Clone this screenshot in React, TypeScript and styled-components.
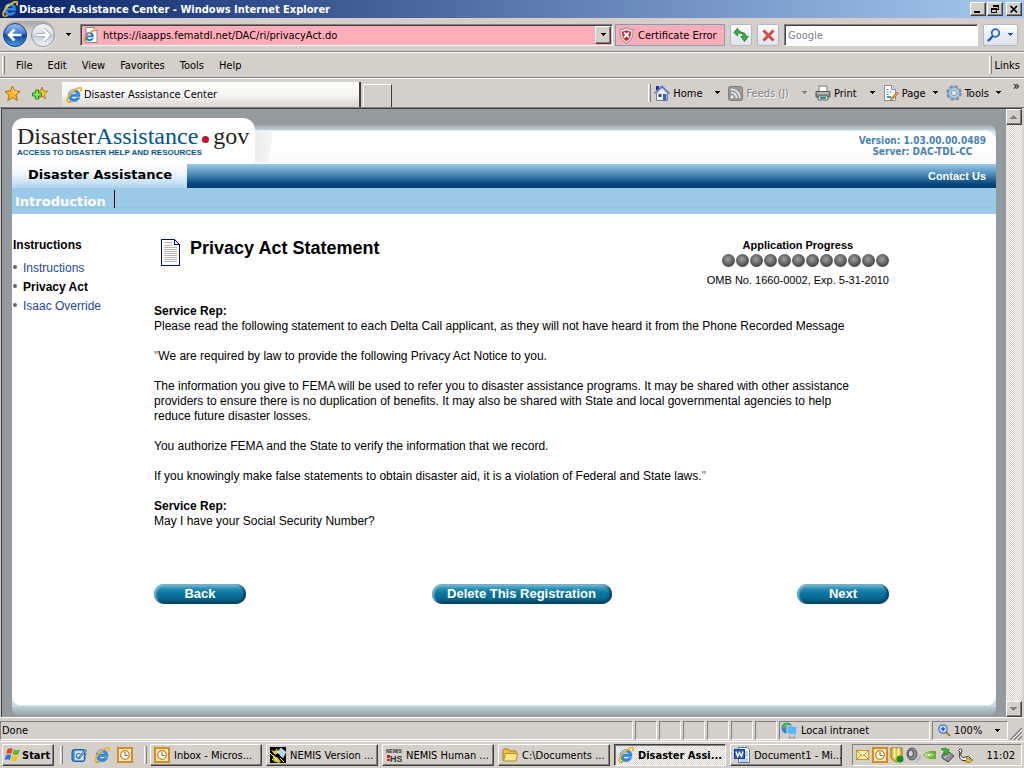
import React from "react";
import styled, { createGlobalStyle, css } from "styled-components";

const tahoma = '"DejaVu Sans Condensed", "DejaVu Sans", sans-serif';
const verdana = '"DejaVu Sans", sans-serif';
const arial = '"Liberation Sans", Arial, sans-serif';

const face = "#d4cfc8";
const shadow = "#808080";
const pageGray = "#939b9e";

const GlobalStyle = createGlobalStyle`
  * { box-sizing: border-box; }
  body { margin: 0; background: ${face}; color: #000; font: 11px/13px ${tahoma}; }
  button, input { font: inherit; color: inherit; margin: 0; padding: 0; border: 0; background: none; border-radius: 0; }
  a { text-decoration: none; color: inherit; }
  h1, h2, p, ul { margin: 0; padding: 0; }
  ul { list-style: none; }
  svg { display: block; flex: none; }
`;

const raised = css`
  border: 1px solid;
  border-color: #fff #404040 #404040 #fff;
  box-shadow: inset -1px -1px 0 ${shadow};
  background: ${face};
`;

const dither = css`
  background: repeating-conic-gradient(#fff 0 25%, ${face} 0 50%) 0 0 / 2px 2px;
`;

/* ---------- window frame ---------- */

const Desktop = styled.div`
  display: flex;
  flex-direction: column;
  min-height: 100vh;
`;

const TitleBar = styled.header`
  display: flex;
  align-items: center;
  gap: 1px;
  height: 18px;
  padding: 0 2px 0 2px;
  background: linear-gradient(90deg, #0a246a, #a6caf0);
`;

const WindowTitle = styled.span`
  flex: 1;
  color: #fff;
  font-weight: bold;
  white-space: nowrap;
`;

const CaptionButton = styled.button<{ $apart?: boolean }>`
  ${raised}
  display: grid;
  place-items: center;
  width: 16px;
  height: 14px;
  margin-left: ${(p) => (p.$apart ? 2 : 0)}px;
`;

const NavRow = styled.div`
  display: flex;
  align-items: center;
  gap: 5px;
  height: 34px;
  padding: 1px 6px 0 2px;
  border-bottom: 1px solid ${shadow};
`;

const TravelButtons = styled.div`
  display: flex;
  align-items: center;
  gap: 2px;
  width: 54px;
  height: 28px;
  flex: none;
  border-radius: 14px;
  background: linear-gradient(#a8a6a2, #d8d4ce 40%, #e4e0da);
`;

const Plain = styled.button`
  display: flex;
  align-items: center;
`;

const HistoryButton = styled(Plain)`
  width: 14px;
  justify-content: center;
`;

const AddressGroup = styled.div`
  display: flex;
  flex: 1;
  gap: 2px;
`;

const AddressBox = styled.label`
  display: flex;
  flex: 1;
  align-items: center;
  gap: 4px;
  height: 22px;
  padding: 0 1px 0 2px;
  border: 1px solid;
  border-color: ${shadow} #fff #fff ${shadow};
  box-shadow: inset 1px 1px 0 #404040;
  background: #ffadb8;
`;

const TextInput = styled.input`
  flex: 1;
  min-width: 0;
  outline: none;
  &::placeholder { color: #808080; opacity: 1; }
`;

const DropButton = styled.button`
  ${raised}
  display: grid;
  place-items: center;
  width: 16px;
  height: 18px;
`;

const CertButton = styled.button`
  display: flex;
  align-items: center;
  gap: 4px;
  width: 110px;
  height: 22px;
  padding-left: 3px;
  border: 1px solid #7f9db9;
  background: #ffadb8;
  white-space: nowrap;
`;

const GlassButton = styled.button<{ $wide?: boolean }>`
  display: flex;
  align-items: center;
  justify-content: ${(p) => (p.$wide ? "space-around" : "center")};
  width: ${(p) => (p.$wide ? 35 : 22)}px;
  height: 22px;
  flex: none;
  border: 1px solid #b4b8c4;
  border-radius: 2px;
  background: linear-gradient(#fdfdfe, #eceef4 50%, #dfe3ee);
`;

const SearchBox = styled.label`
  display: flex;
  align-items: center;
  width: 194px;
  height: 22px;
  padding-left: 3px;
  border: 1px solid;
  border-color: ${shadow} #fff #fff ${shadow};
  box-shadow: inset 1px 1px 0 #404040;
  background: #fff;
`;

const MenuRow = styled.nav`
  display: flex;
  align-items: center;
  gap: 15px;
  height: 26px;
  padding: 0 4px 0 2px;
  border-top: 1px solid #fff;
  border-bottom: 1px solid ${shadow};
`;

const Grip = styled.i`
  width: 3px;
  height: 18px;
  flex: none;
  margin-right: -4px;
  border-left: 1px solid #fff;
  border-right: 1px solid ${shadow};
`;

const LinksGroup = styled.div`
  display: flex;
  align-items: center;
  gap: 7px;
  margin-left: auto;
`;

const TabRow = styled.div`
  display: flex;
  align-items: center;
  height: 30px;
  padding: 0 4px 0 4px;
  border-top: 1px solid #fff;
  border-bottom: 1px solid ${shadow};
`;

const FavButtons = styled.div`
  display: flex;
  gap: 10px;
  width: 58px;
`;

const BrowserTab = styled.button`
  display: flex;
  align-items: center;
  align-self: flex-end;
  gap: 2px;
  width: 299px;
  height: 25px;
  padding-left: 4px;
  border-right: 2px solid #404040;
  background: linear-gradient(#fff, #f6f5f3 50%, #dad6cf);
`;

const NewTab = styled.button`
  align-self: flex-end;
  width: 29px;
  height: 23px;
  margin-left: 2px;
  border: 1px solid #fff;
  border-right: 1px solid #404040;
  border-bottom: 0;
`;

const CommandBar = styled.div`
  display: flex;
  align-items: center;
  gap: 7px;
  height: 29px;
  margin-left: auto;
`;

const Command = styled.button<{ $split?: boolean }>`
  display: flex;
  align-items: center;
  gap: 3px;
  white-space: nowrap;
  &:disabled { color: ${shadow}; text-shadow: 1px 1px 0 #fff; }
  & > svg:last-child { margin-left: ${(p) => (p.$split ? 9 : 3)}px; }
`;

const Chevron = styled.button`
  align-self: flex-start;
  margin-left: 4px;
  font-size: 13px;
`;

/* ---------- web page ---------- */

const Viewport = styled.div`
  display: flex;
  flex: 1;
  border-top: 1px solid #404040;
  border-left: 1px solid #404040;
  margin: 0 2px 0 1px;
  background: ${pageGray};
`;

const WebPage = styled.main`
  display: flex;
  flex: 1;
  flex-direction: column;
  min-width: 0;
  padding: 9px 10px 0 10px;
`;

const ScrollTrack = styled.div`
  ${dither}
  display: flex;
  flex-direction: column;
  justify-content: space-between;
  width: 16px;
  flex: none;
`;

const ScrollButton = styled.button`
  ${raised}
  display: grid;
  place-items: center;
  width: 16px;
  height: 16px;
`;

const Masthead = styled.header`
  display: flex;
  align-items: flex-end;
`;

const LogoCard = styled.a`
  width: 243px;
  height: 46px;
  flex: none;
  padding: 5px 0 0 5px;
  border-radius: 12px 12px 0 0;
  background: #fff;
`;

const LogoName = styled.span`
  display: flex;
  align-items: center;
  font: 24px/26px "Liberation Serif", serif;
  color: #231f20;
  & > b { font-weight: normal; color: #00558c; }
`;

const LogoDot = styled.i`
  width: 7px;
  height: 7px;
  margin: 7px 4px 0;
  border-radius: 50%;
  background: #c8102e;
`;

const LogoTag = styled.span`
  display: block;
  font: bold 8px/8px ${arial};
  color: #00558c;
  white-space: nowrap;
`;

const BandWrap = styled.div`
  flex: 1;
  border-radius: 0 12px 0 0;
  background: linear-gradient(${pageGray} 2px, #b9c8cf 7px, #cfe0e8 9px, #cfe0e8 12px, ${pageGray});
`;

const Band = styled.div`
  display: flex;
  justify-content: space-between;
  height: 34px;
  margin-top: 8px;
  padding-right: 10px;
  border-top: 1px solid #d8f0fa;
  border-radius: 0 10px 0 0;
  background: linear-gradient(#fff, #fff 50%, #f8f9fa);
`;

const Fold = styled.i`
  width: 18px;
  height: 31px;
  background: linear-gradient(90deg, #ececec, #f6f6f6);
  clip-path: polygon(0 0, 100% 0, 75% 100%, 0 100%);
`;

const Version = styled.p`
  padding-top: 4px;
  font: bold 10px/11px ${tahoma};
  color: #4682b4;
  text-align: center;
`;

const MainNav = styled.nav`
  display: flex;
  align-items: center;
  justify-content: space-between;
  height: 24px;
  padding-right: 10px;
  background: linear-gradient(#9acae8, #4a88b4 45%, #0a4a80 80%, #003c72);
  font: bold 11px/13px ${arial};
  color: #fff;
`;

const ActiveSection = styled.a`
  width: 175px;
  height: 24px;
  padding: 3px 0 0 16px;
  background: linear-gradient(#fff, #edf4fb 45%, #b0d4f0);
  font: bold 13px/16px ${verdana};
  color: #000;
  white-space: nowrap;
`;

const SubNav = styled.nav`
  display: flex;
  height: 26px;
  padding: 2px 0 0 3px;
  background: linear-gradient(#9acae8 19px, #92c3e2 19px, #92c3e2 20px, #9acae8 20px);
  font: bold 13px/23px ${verdana};
  color: #fff;
  & > a { padding-right: 8px; }
`;

const NavRule = styled.i`
  width: 1px;
  height: 18px;
  background: #000;
`;

const Sheet = styled.div`
  display: flex;
  flex: 1;
  padding-right: 107px;
  border-radius: 0 0 8px 8px;
  background: #fff;
  font: 12px/15px ${arial};
`;

const SheetBack = styled.div`
  display: flex;
  flex: 1;
  background: linear-gradient(#fff, #fff calc(100% - 8px), #c9dbe4 0);
`;

const SheetShadow = styled.div`
  height: 12px;
  border-radius: 0 0 10px 10px;
  background: linear-gradient(#d4eaf4, #bccdd5 2px, ${pageGray});
`;

const SideNav = styled.nav`
  width: 142px;
  flex: none;
  padding: 24px 0 0 1px;
`;

const SideTitle = styled.h2`
  margin-bottom: 6px;
  font-size: 12px;
  line-height: 15px;
`;

const SideItem = styled.li<{ $current?: boolean }>`
  display: flex;
  gap: 6px;
  font-weight: ${(p) => (p.$current ? "bold" : "normal")};
  color: ${(p) => (p.$current ? "#000" : "#1f4a8f")};
  line-height: 19px;
  &::before {
    content: "";
    width: 4px;
    height: 4px;
    margin-top: 6px;
    border-radius: 50%;
    background: #666;
  }
`;

const Article = styled.article`
  flex: 1;
  min-width: 0;
`;

const ArticleHead = styled.div`
  display: flex;
  justify-content: space-between;
  height: 90px;
  padding: 25px 0 0 7px;
`;

const Heading = styled.div`
  display: flex;
  gap: 10px;
  & > h1 { font-size: 18px; line-height: 18px; }
`;

const Progress = styled.div`
  display: flex;
  flex-direction: column;
  align-items: center;
  gap: 2px;
  font-size: 11px;
  line-height: 13px;
  & > p { margin-top: 5px; }
`;

const Dots = styled.div`
  display: flex;
  align-self: flex-end;
  gap: 1px;
`;

const Dot = styled.i`
  width: 13px;
  height: 13px;
  border-radius: 50%;
  background: radial-gradient(circle at 45% 40%, #a0a0a0, #666 45%, #2c2c2c 90%);
`;

const Copy = styled.div`
  display: flex;
  flex-direction: column;
  gap: 15px;
  max-width: 711px;
  & i { font-style: normal; color: #a0522d; }
`;

const Actions = styled.div`
  display: flex;
  justify-content: space-between;
  margin: 55px 0 40px;
`;

const PillButton = styled.button<{ $wide?: boolean }>`
  width: ${(p) => (p.$wide ? 180 : 92)}px;
  height: 20px;
  border-radius: 10px;
  background: linear-gradient(#7fbdd6, #2a8cb2 25%, #0a76a2 45%, #086a94 70%, #05405c);
  box-shadow: inset -2px -1px 2px #04415e, inset 2px 1px 2px #7fb8d0;
  font: bold 13px/18px ${arial};
  color: #fff;
`;

/* ---------- status bar and task bar ---------- */

const StatusBar = styled.footer`
  display: flex;
  gap: 2px;
  height: 24px;
  padding: 3px 2px 1px 0;
  border-top: 1px solid #fff;
`;

const StatusCell = styled.div<{ $width?: number }>`
  display: flex;
  align-items: center;
  gap: 3px;
  ${(p) => (p.$width ? `width: ${p.$width}px;` : "flex: 1;")}
  height: 19px;
  padding: 0 1px;
  border: 1px solid;
  border-color: ${shadow} #fff #fff ${shadow};
`;

const ZoomButton = styled(Plain)`
  flex: 1;
  gap: 3px;
  padding: 0 5px 0 4px;
  & > svg:last-child { margin-left: auto; }
`;

const TaskBar = styled.footer`
  display: flex;
  align-items: center;
  gap: 4px;
  height: 27px;
  padding: 0 2px;
  border-top: 1px solid #fff;
`;

const StartButton = styled.button`
  ${raised}
  display: flex;
  align-items: center;
  gap: 2px;
  width: 52px;
  height: 22px;
  padding-left: 1px;
  font-weight: bold;
`;

const QuickLaunch = styled.div`
  display: flex;
  align-items: center;
  gap: 7px;
  width: 87px;
  margin-left: 1px;
  padding-left: 1px;
  & > i { margin: 0 1px 0 0; }
  & > i:last-child { margin: 0 0 0 4px; }
`;

const TaskButton = styled.button<{ $active?: boolean }>`
  ${raised}
  display: flex;
  align-items: center;
  gap: 4px;
  flex: 0 1 112px;
  min-width: 0;
  height: 22px;
  padding-left: 3px;
  white-space: nowrap;
  ${(p) =>
    p.$active &&
    css`
      ${dither}
      border-color: #404040 #fff #fff #404040;
      box-shadow: inset 1px 1px 0 ${shadow};
      font-weight: bold;
    `}
`;

const Tray = styled.div`
  display: flex;
  align-items: center;
  gap: 2px;
  height: 22px;
  width: 170px;
  margin-left: auto;
  padding: 0 6px 0 3px;
  border: 1px solid;
  border-color: ${shadow} #fff #fff ${shadow};
  & > time { margin-left: auto; }
`;

/* ---------- icons ---------- */

const Arrow = ({ color = "#000" }: { color?: string }) => (
  <svg width="7" height="4" shapeRendering="crispEdges">
    <path d="M1 0h5v1h-1v1h-1v1h-1v-1h-1v-1h-1z" fill={color} />
  </svg>
);

const IeIcon = ({ size = 16 }: { size?: number }) => (
  <svg width={size} height={size} viewBox="0 0 16 16">
    <path d="M14 9.500H5.400c.2 1.600 1.400 2.400 2.900 2.400 1 0 1.900-.4 2.400-1.200h3c-.8 2.400-2.800 3.900-5.500 3.900-3.500 0-6-2.400-6-5.900 0-3.600 2.600-6.200 6-6.200 3.500 0 5.800 2.500 5.800 6.100zM10.900 7.100C10.700 5.800 9.700 5.200 8.300 5.200S5.800 5.800 5.500 7.100z" fill="#2a90ea" stroke="#1763c0" strokeWidth=".4" />
    <path d="M3.700 6C4.700 4.200 6.300 3.400 8.300 3.400" stroke="#a8e4ff" strokeWidth="1.200" fill="none" />
    <path d="M1.700 14.700C-.5 12 4.500 5.800 9.500 2.600 12.300.8 15 .3 15.300 1.700c.2.800-.2 1.800-.7 2.700" fill="none" stroke="#f8b420" strokeWidth="1.800" />
    <path d="M1.700 14.700c.9.900 2.700.3 4.300-.7" fill="none" stroke="#e09a18" strokeWidth="1.500" />
  </svg>
);

const PageIe = () => (
  <svg width="16" height="16" viewBox="0 0 16 16">
    <path d="M3 .5h8l3 3v12H3z" fill="#fff" stroke="#8a8a8a" />
    <path d="M11 .5v3h3" fill="#ddd" stroke="#8a8a8a" />
    <g transform="translate(0 3) scale(.78)">
      <path d="M13.800 9.300H5.600c.2 1.600 1.300 2.500 2.800 2.500 1 0 1.800-.4 2.300-1.200h2.900c-.8 2.300-2.700 3.700-5.300 3.700-3.400 0-5.800-2.300-5.800-5.700 0-3.500 2.500-6 5.800-6 3.400 0 5.600 2.400 5.600 5.900zM10.900 7.100C10.700 5.800 9.700 5 8.300 5S5.900 5.800 5.600 7.100z" fill="#1f78d8" />
      <path d="M1.700 14.700C-.5 12 4.500 5.800 9.500 2.600 12.300.8 15 .3 15.300 1.700" fill="none" stroke="#f0a010" strokeWidth="1.800" />
    </g>
  </svg>
);

const TravelIcon = ({ forward }: { forward?: boolean }) => (
  <svg width="26" height="26" viewBox="0 0 26 26">
    <defs>
      <linearGradient id={forward ? "fwd" : "bck"} x1="0" y1="0" x2="0" y2="1">
        <stop offset="0" stopColor={forward ? "#f4f6f9" : "#9cc0ee"} />
        <stop offset=".45" stopColor={forward ? "#dde3ec" : "#3f78cc"} />
        <stop offset=".5" stopColor={forward ? "#bfc9d8" : "#0d3f9c"} />
        <stop offset="1" stopColor={forward ? "#f5f8fb" : "#4aa0ee"} />
      </linearGradient>
    </defs>
    <circle cx="13" cy="13" r="11.500" fill={`url(#${forward ? "fwd" : "bck"})`} stroke={forward ? "#8b95a6" : "#173a7c"} />
    <path
      d={forward ? "M6.500 13h12M13.500 7.500l5.500 5.500-5.500 5.500" : "M19.500 13h-12M12.500 7.500L7 13l5.500 5.500"}
      fill="none"
      stroke={forward ? "#8c98aa" : "transparent"}
      strokeWidth="4"
    />
    <path
      d={forward ? "M6.500 13h12M13.500 7.500l5.500 5.500-5.500 5.500" : "M19.500 13h-12M12.500 7.500L7 13l5.500 5.500"}
      fill="none"
      stroke="#fff"
      strokeWidth="2.600"
    />
  </svg>
);

const ShieldIcon = () => (
  <svg width="15" height="17" viewBox="0 0 15 17">
    <path d="M7.500.8C9.500 2.200 11.500 2.500 14 2.500c.5 6-1 11-6.500 13.700C2 13.500.5 8.500 1 2.500c2.500 0 4.500-.3 6.500-1.700z" fill="#e0e0e0" stroke="#8c8c8c" />
    <path d="M7.500 3.200c1.400.9 2.800 1.200 4.500 1.300.1 4.300-1 7.500-4.500 9.500-3.500-2-4.600-5.200-4.500-9.500 1.700-.1 3.100-.4 4.500-1.300z" fill="#cc1f1f" />
    <path d="M5 5.500l5 5M10 5.500l-5 5" stroke="#fff" strokeWidth="2" />
  </svg>
);

const RefreshIcon = () => (
  <svg width="16" height="16" viewBox="0 0 16 16">
    <path d="M.8 5.500L4.800 1v2.500c2.500 0 3.700 1.200 3.700 3.500-1-.8-2-1-3.700-1v3z" fill="#3cb042" stroke="#157a1c" strokeWidth=".8" />
    <path d="M15.200 9.500l-3.700 5-3.700-5h2.200c0-2-.4-3-1.500-4 2.700 0 4.500 1.200 4.500 4z" fill="#3cb042" stroke="#157a1c" strokeWidth=".8" />
  </svg>
);

const StopIcon = () => (
  <svg width="13" height="13" viewBox="0 0 13 13">
    <path d="M1.500 1.500l10 10M11.500 1.500l-10 10" stroke="#b02a2a" strokeWidth="2.600" />
    <path d="M1.500 1.500l10 10M11.500 1.500l-10 10" stroke="#e25858" strokeWidth="1.400" />
  </svg>
);

const SearchIcon = () => (
  <svg width="14" height="14" viewBox="0 0 14 14">
    <path d="M1 13l5-5" stroke="#1a55d0" strokeWidth="2.400" />
    <circle cx="8.500" cy="5" r="3.800" fill="#eaf4ff" stroke="#2a62dc" strokeWidth="1.800" />
  </svg>
);

const StarIcon = () => (
  <svg width="17" height="17" viewBox="0 0 17 17">
    <path d="M8.500 1l2.100 5 5.400.5-4 3.600 1.200 5.400-4.700-2.900-4.700 2.900L5 10.100 1 6.500 6.400 6z" fill="#fdb827" stroke="#b06a10" />
    <path d="M8.500 3.500l1.300 3.400 3.200.3" fill="none" stroke="#ffe89a" />
  </svg>
);

const AddStarIcon = () => (
  <svg width="17" height="17" viewBox="0 0 17 17">
    <path d="M11 2l1.500 4 4 .4-3 2.800 1 4.300-3.500-2.300-3.500 2.300 1-4.300-3-2.800 4-.4z" fill="#fdc547" stroke="#b87816" />
    <path d="M4.500 5h3v3h3v3h-3v3h-3v-3h-3V8h3z" fill="#8ee060" stroke="#1b8a22" />
  </svg>
);

const HomeIcon = () => (
  <svg width="16" height="16" viewBox="0 0 16 16">
    <path d="M2 1h3v4H2z" fill="#1a2fc0" />
    <path d="M2.500 8L8 2.500 13.500 8v7.500h-11z" fill="#e9edf4" stroke="#77839a" />
    <path d="M.5 8.500L8 1.200l7.500 7.300" fill="none" stroke="#5b72c8" strokeWidth="1.500" />
    <path d="M9 9h3.500v6.500H9z" fill="#3a60b8" />
    <path d="M4.500 9h3v3h-3z" fill="#4a4a4a" />
  </svg>
);

const FeedIcon = () => (
  <svg width="15" height="15" viewBox="0 0 15 15">
    <rect x=".5" y=".5" width="14" height="14" rx="2" fill="#9a9a9a" stroke="#7e7e7e" />
    <circle cx="4" cy="11" r="1.400" fill="#eee" />
    <path d="M3 6.500a5.500 5.500 0 0 1 5.500 5.500M3 3.200A8.800 8.800 0 0 1 11.800 12" fill="none" stroke="#eee" strokeWidth="1.500" />
  </svg>
);

const PrintIcon = () => (
  <svg width="16" height="16" viewBox="0 0 16 16">
    <path d="M4 1h8v6H4z" fill="#fff" stroke="#777" />
    <path d="M1 6.500h14V12H1z" fill="#8c8c8c" stroke="#555" />
    <path d="M2 8h12" stroke="#ddd" />
    <path d="M3.500 11h9l.5 4H3z" fill="#e8f0f4" stroke="#666" />
    <path d="M5 13h4" stroke="#2a8ab8" strokeWidth="2" />
    <path d="M9 13h2" stroke="#3aa048" strokeWidth="2" />
  </svg>
);

const PageIcon = () => (
  <svg width="16" height="16" viewBox="0 0 16 16">
    <path d="M1.500.5h7l4 4v11h-11z" fill="#fff" stroke="#8c8c94" />
    <path d="M8.500.5v4h4" fill="#d8dce8" stroke="#8c8c94" />
    <path d="M3.500 4.500h3M3.500 7h6M3.500 9.500h3" stroke="#5a7fd0" strokeDasharray="2 1" />
    <path d="M8 13l6-6 1.500 1.500-6 6L7.500 15z" fill="#f0a030" stroke="#a05a18" strokeWidth=".7" />
    <path d="M4 12h4" stroke="#36a0c0" strokeWidth="2" />
  </svg>
);

const GearIcon = () => (
  <svg width="16" height="16" viewBox="0 0 16 16">
    <circle cx="8" cy="8" r="6.500" fill="none" stroke="#7592b0" strokeWidth="2.600" strokeDasharray="3 2.100" />
    <circle cx="8" cy="8" r="6" fill="#9dbbd8" stroke="#6f8fae" strokeWidth=".8" />
    <circle cx="8" cy="8" r="4.300" fill="#bcd3e8" />
    <circle cx="8" cy="8" r="2.800" fill="#e4e2de" stroke="#6f8fae" strokeWidth=".8" />
  </svg>
);

const DocumentIcon = () => (
  <svg width="19" height="27" viewBox="0 0 19 27" shapeRendering="crispEdges">
    <path d="M.5.500h13l5 5v21H.5z" fill="#fff" stroke="#0a0a80" />
    <path d="M13.500.500v5h5" fill="none" stroke="#0a0a80" />
    <path d="M3 3.500h8M3 6.500h8M3 8.500h13M3 10.500h13M3 12.500h13M3 14.500h13M3 16.500h13M3 18.500h13M3 20.500h13M3 22.500h13" stroke="#b4b4b4" />
  </svg>
);

const FlagIcon = () => (
  <svg width="16" height="16" viewBox="0 2 14 13">
    <path d="M3 3.500c1.500-1.200 3-1.200 4.500-.2L6.500 7.500C5 6.700 3.500 6.700 2 7.700z" fill="#e8401c" />
    <path d="M8.500 3.700c1.500.9 3.500.9 5.500-.2l-1.200 4.200c-1.700 1-3.500 1-5.200.2z" fill="#66b32e" />
    <path d="M1.700 8.800c1.500-1 3-1 4.500-.2L5.200 12.800c-1.500-.8-3-.8-4.500.2z" fill="#2f6fe0" />
    <path d="M7.300 9c1.700.8 3.500.8 5.200-.2l-1.200 4.200c-1.700 1-3.500 1-5 .2z" fill="#f8c01c" />
  </svg>
);

const ShowDesktopIcon = () => (
  <svg width="16" height="16" viewBox="0 0 16 16">
    <rect x="1" y="2.500" width="13" height="12" rx="2.500" fill="#3b8fd8" stroke="#15569c" />
    <path d="M4 4h7l1.500 1.500V13H4z" fill="#fff" stroke="#9cc8ea" />
    <path d="M9.500 6.500c-3-.8-4.500 1-4 3s2.500 2.300 4 1.500" fill="none" stroke="#2b6cb8" strokeWidth="1.300" />
    <path d="M7.500 10L14 2.500l1.500 1.300L9 11z" fill="#6ab4ec" stroke="#15569c" strokeWidth=".7" />
    <path d="M14 6l2 1.500-2 1.500z" fill="#d06020" />
  </svg>
);

const OutlookIcon = () => (
  <svg width="16" height="16" viewBox="0 0 16 16">
    <rect x="1" y="1" width="14" height="14" fill="#fff0c8" stroke="#d98a1c" strokeWidth="2" />
    <circle cx="8" cy="8" r="4.300" fill="#fff" stroke="#c87812" strokeWidth="1.300" />
    <path d="M8 5v3.500h2.500" fill="none" stroke="#8a5a1a" />
  </svg>
);

const NemisIcon = () => (
  <svg width="16" height="16" viewBox="0 0 16 16">
    <rect width="16" height="16" fill="#000" />
    <path d="M1 3l4 1 2-3 1 5-3 2zM3 8l5 3 3 4-3 1-5-4z" fill="#d8cc30" />
    <path d="M7 5l4-4 5 4-3 6z" fill="#a8dcf0" stroke="#fff" strokeDasharray="1 1" />
    <path d="M2 12l4 3M0 6l7 7M10 11l4 4" stroke="#fff8a0" />
  </svg>
);

const SvgLabel = styled.text`
  font-family: ${arial};
  font-weight: bold;
`;

const NemisHsIcon = () => (
  <svg width="16" height="16" viewBox="0 0 16 16" aria-hidden="true">
    <SvgLabel x="0" y="6" fontSize="5" fill="#333">NEMIS</SvgLabel>
    <path d="M1 8h3v3H1zM1 12h3v2H1z" fill="#d02020" />
    <SvgLabel x="4" y="15" fontSize="9" fill="#333">HS</SvgLabel>
  </svg>
);

const FolderIcon = () => (
  <svg width="16" height="16" viewBox="0 0 16 16">
    <path d="M1 3.500l1-1.500h4l1.500 2H14v9.500H1z" fill="#f0c040" stroke="#a87c18" />
    <path d="M3.500 6.500h12l-1.500 7.500H1.500z" fill="#fde88a" stroke="#b88a20" />
  </svg>
);

const WordIcon = () => (
  <svg width="16" height="16" viewBox="0 0 16 16">
    <path d="M4.500.5h9l2 2v13h-11z" fill="#fff" stroke="#5070b0" />
    <path d="M11 5h3M11 7h3M11 9h3M6 12h8M6 14h8" stroke="#7a9ad8" />
    <rect x=".5" y="2.500" width="10" height="9" fill="#2f5fc0" stroke="#183a88" />
    <path d="M2 4.500l1.600 5 1.900-4 1.900 4L9 4.500" fill="none" stroke="#fff" strokeWidth="1.300" />
  </svg>
);

const IntranetIcon = () => (
  <svg width="17" height="17" viewBox="0 0 17 17">
    <circle cx="6" cy="6" r="5.500" fill="#3a78d0" />
    <path d="M2 3c2-2.500 5-2.500 6-1L6 5 3 7 1 6z" fill="#4cb84a" />
    <path d="M6 3.500l10 1-.5 8.500L6 12z" fill="#5cb8f4" stroke="#c4d4e8" />
    <path d="M9 13l-1 3h6l-1-2.500" fill="#c8ccd4" stroke="#7c8490" strokeWidth=".7" />
  </svg>
);

const ZoomIcon = () => (
  <svg width="13" height="13" viewBox="0 0 13 13">
    <path d="M7.500 7.500L12 12" stroke="#c07830" strokeWidth="2.200" />
    <circle cx="5" cy="5" r="4.200" fill="#d8ecff" stroke="#3a72c4" strokeWidth="1.200" />
    <path d="M5 2.800v4.400M2.800 5h4.400" stroke="#1a55b8" strokeWidth="1.400" />
  </svg>
);

const SizeGrip = () => (
  <svg width="12" height="19" viewBox="0 0 12 19">
    <path d="M0 19L12 7M4 19l8-8M8 19l4-4" stroke="#808080" strokeWidth="1.500" />
    <path d="M2 19l10-10M6 19l6-6" stroke="#fff" />
  </svg>
);

const MailIcon = () => (
  <svg width="14" height="16" viewBox="0 0 14 16">
    <rect x=".5" y="3.500" width="12" height="9" fill="#fff6c8" stroke="#d09418" />
    <path d="M1 4l5.500 5L12 4M1 12l4-4M12 12L8 8" fill="none" stroke="#c88a18" />
  </svg>
);

const TrayShield = () => (
  <svg width="14" height="16" viewBox="0 0 14 16">
    <path d="M1 1h11v8c0 3-3 5-5.500 6C4 14 1 12 1 9z" fill="#f0c428" stroke="#906c14" />
    <path d="M4.500 1v10M8.500 1v8" stroke="#fff" strokeWidth="1.500" />
    <circle cx="10" cy="12" r="3.500" fill="#149028" />
  </svg>
);

const SpeakerIcon = () => (
  <svg width="15" height="16" viewBox="0 0 15 16">
    <ellipse cx="6" cy="7" rx="5" ry="6" fill="#8c8c94" stroke="#55555c" />
    <ellipse cx="4.800" cy="6.500" rx="2.600" ry="3.600" fill="#d0d0d8" stroke="#444" />
    <path d="M11 13c2-1 3-3 2.500-5M9 15c4-1 6-4 5.500-7" fill="none" stroke="#a8a8e0" />
  </svg>
);

const NvidiaIcon = () => (
  <svg width="15" height="16" viewBox="0 0 15 16">
    <path d="M6 4h7v8H6z" fill="#6cb02c" />
    <path d="M.8 8C3 4.500 7 4 11 7.500 8 12 3.500 12 .8 8z" fill="#c8e4a0" stroke="#6cb02c" />
    <path d="M3.500 8c1.500-2 3.500-2 5 0-1.500 2-3.500 2-5 0z" fill="#fff" stroke="#6cb02c" />
  </svg>
);

const EjectIcon = () => (
  <svg width="15" height="16" viewBox="0 0 15 16">
    <path d="M2 8l7-3 5 4-6 6-6-4z" fill="#8c9098" stroke="#44484e" />
    <path d="M4 11l6-4" stroke="#d4d8dc" />
    <path d="M1 2l5-1 1 2 2-1-1 6-5-2 2-1z" fill="#3cb838" stroke="#1a7a1c" strokeWidth=".7" />
  </svg>
);

const GooseIcon = () => (
  <svg width="17" height="16" viewBox="0 0 17 16">
    <path d="M1.500 3.500C3 1 6 2 4.500 5s-1 5 2 5.500l5-1 2 2-4 2.500-5-1C2 11 2 8 3 5z" fill="#fff" stroke="#222" />
    <path d="M10 11l6 2-4 2.500-4-1z" fill="#f0d028" stroke="#6a5a10" strokeWidth=".7" />
  </svg>
);

/* ---------- content ---------- */

const menus = ["File", "Edit", "View", "Favorites", "Tools", "Help"];

const commands = [
  { label: "Home", icon: <HomeIcon />, split: true },
  { label: "Feeds (J)", icon: <FeedIcon />, split: true, disabled: true },
  { label: "Print", icon: <PrintIcon />, split: true },
  { label: "Page", icon: <PageIcon /> },
  { label: "Tools", icon: <GearIcon /> },
];

const tasks = [
  { label: "Inbox - Micros...", icon: <OutlookIcon /> },
  { label: "NEMIS Version ...", icon: <NemisIcon /> },
  { label: "NEMIS Human ...", icon: <NemisHsIcon /> },
  { label: "C:\\Documents ...", icon: <FolderIcon /> },
  { label: "Disaster Assi...", icon: <IeIcon />, active: true },
  { label: "Document1 - Mi...", icon: <WordIcon /> },
];

export default function App() {
  return (
    <Desktop>
      <GlobalStyle />

      <TitleBar>
        <IeIcon />
        <WindowTitle>Disaster Assistance Center - Windows Internet Explorer</WindowTitle>
        <CaptionButton aria-label="Minimize">
          <svg width="10" height="9" shapeRendering="crispEdges"><path d="M1 6h6v2H1z" /></svg>
        </CaptionButton>
        <CaptionButton aria-label="Restore">
          <svg width="10" height="10" shapeRendering="crispEdges">
            <path d="M3 1.500h5.500V6M3.500 1v2M1.500 4.500h4.500v4H1.500zM1 5.500h5M3 2.500h5M6 5.500h3" fill="none" stroke="#000" />
          </svg>
        </CaptionButton>
        <CaptionButton $apart aria-label="Close">
          <svg width="10" height="9"><path d="M1.500 1l6.500 6.500M8 1L1.500 7.500" stroke="#000" strokeWidth="1.700" /></svg>
        </CaptionButton>
      </TitleBar>

      <NavRow>
        <TravelButtons>
          <Plain aria-label="Back"><TravelIcon /></Plain>
          <Plain aria-label="Forward"><TravelIcon forward /></Plain>
        </TravelButtons>
        <HistoryButton aria-label="Recent pages"><Arrow /></HistoryButton>
        <AddressGroup>
          <AddressBox>
            <PageIe />
            <TextInput aria-label="Address" defaultValue="https://iaapps.fematdl.net/DAC/ri/privacyAct.do" />
            <DropButton aria-label="Show addresses"><Arrow /></DropButton>
          </AddressBox>
          <CertButton><ShieldIcon />Certificate Error</CertButton>
        </AddressGroup>
        <GlassButton aria-label="Refresh"><RefreshIcon /></GlassButton>
        <GlassButton aria-label="Stop"><StopIcon /></GlassButton>
        <SearchBox><TextInput aria-label="Search" placeholder="Google" /></SearchBox>
        <GlassButton $wide aria-label="Search the web"><SearchIcon /><Arrow color="#1a55d0" /></GlassButton>
      </NavRow>

      <MenuRow>
        <Grip />
        {menus.map((m) => <Plain key={m}>{m}</Plain>)}
        <LinksGroup><Grip /><Plain>Links</Plain></LinksGroup>
      </MenuRow>

      <TabRow>
        <FavButtons>
          <Plain aria-label="Favorites Center"><StarIcon /></Plain>
          <Plain aria-label="Add to Favorites"><AddStarIcon /></Plain>
        </FavButtons>
        <BrowserTab><IeIcon />Disaster Assistance Center</BrowserTab>
        <NewTab aria-label="New tab" />
        <CommandBar>
          <Grip />
          {commands.map((c) => (
            <Command key={c.label} $split={c.split} disabled={c.disabled}>
              {c.icon}{c.label}<Arrow color={c.disabled ? "#808080" : "#000"} />
            </Command>
          ))}
          <Chevron aria-label="More commands">»</Chevron>
        </CommandBar>
      </TabRow>

      <Viewport>
        <WebPage>
          <Masthead>
            <LogoCard href="#home">
              <LogoName>Disaster<b>Assistance</b><LogoDot />gov</LogoName>
              <LogoTag>ACCESS TO DISASTER HELP AND RESOURCES</LogoTag>
            </LogoCard>
            <BandWrap>
              <Band>
                <Fold />
                <Version>Version: 1.03.00.00.0489<br />Server: DAC-TDL-CC</Version>
              </Band>
            </BandWrap>
          </Masthead>
          <MainNav>
            <ActiveSection href="#assistance">Disaster Assistance</ActiveSection>
            <a href="#contact">Contact Us</a>
          </MainNav>
          <SubNav><a href="#introduction">Introduction</a><NavRule /></SubNav>

          <SheetBack>
            <Sheet>
              <SideNav>
                <SideTitle>Instructions</SideTitle>
                <ul>
                  <SideItem><a href="#instructions">Instructions</a></SideItem>
                  <SideItem $current><a href="#privacy">Privacy Act</a></SideItem>
                  <SideItem><a href="#override">Isaac Override</a></SideItem>
                </ul>
              </SideNav>
              <Article>
                <ArticleHead>
                  <Heading><DocumentIcon /><h1>Privacy Act Statement</h1></Heading>
                  <Progress>
                    <b>Application Progress</b>
                    <Dots>{Array.from({ length: 12 }, (_, i) => <Dot key={i} />)}</Dots>
                    <p>OMB No. 1660-0002, Exp. 5-31-2010</p>
                  </Progress>
                </ArticleHead>
                <Copy>
                  <p>
                    <b>Service Rep:</b><br />
                    Please read the following statement to each Delta Call applicant, as they will not have heard it from the Phone Recorded Message
                  </p>
                  <p><i>"</i>We are required by law to provide the following Privacy Act Notice to you.</p>
                  <p>
                    The information you give to FEMA will be used to refer you to disaster assistance programs. It may be shared with other assistance
                    providers to ensure there is no duplication of benefits. It may also be shared with State and local governmental agencies to help
                    reduce future disaster losses.
                  </p>
                  <p>You authorize FEMA and the State to verify the information that we record.</p>
                  <p>If you knowingly make false statements to obtain disaster aid, it is a violation of Federal and State laws.<i>"</i></p>
                  <p><b>Service Rep:</b><br />May I have your Social Security Number?</p>
                </Copy>
                <Actions>
                  <PillButton>Back</PillButton>
                  <PillButton $wide>Delete This Registration</PillButton>
                  <PillButton>Next</PillButton>
                </Actions>
              </Article>
            </Sheet>
          </SheetBack>
          <SheetShadow />
        </WebPage>
        <ScrollTrack>
          <ScrollButton aria-label="Scroll up">
            <svg width="8" height="5" shapeRendering="crispEdges"><path d="M3 0h1v1h1v1h1v1h1v1H0V3h1V2h1V1h1z" fill="#808080" /></svg>
          </ScrollButton>
          <ScrollButton aria-label="Scroll down">
            <svg width="8" height="5" shapeRendering="crispEdges"><path d="M0 0h7v1H6v1H5v1H4v1H3V3H2V2H1V1H0z" fill="#808080" /></svg>
          </ScrollButton>
        </ScrollTrack>
      </Viewport>

      <StatusBar>
        <StatusCell>Done</StatusCell>
        {[0, 1, 2, 3, 4, 5].map((n) => <StatusCell key={n} $width={22} />)}
        <StatusCell $width={151}><IntranetIcon />Local intranet</StatusCell>
        <StatusCell $width={76}><ZoomButton><ZoomIcon />100%<Arrow /></ZoomButton></StatusCell>
        <SizeGrip />
      </StatusBar>

      <TaskBar>
        <StartButton><FlagIcon />Start</StartButton>
        <QuickLaunch>
          <Grip />
          <Plain aria-label="Show Desktop"><ShowDesktopIcon /></Plain>
          <Plain aria-label="Internet Explorer"><IeIcon /></Plain>
          <Plain aria-label="Outlook"><OutlookIcon /></Plain>
          <Grip />
        </QuickLaunch>
        {tasks.map((t) => <TaskButton key={t.label} $active={t.active}>{t.icon}{t.label}</TaskButton>)}
        <Tray>
          <MailIcon /><OutlookIcon /><TrayShield /><SpeakerIcon /><NvidiaIcon /><EjectIcon /><GooseIcon />
          <time>11:02</time>
        </Tray>
      </TaskBar>
    </Desktop>
  );
}
